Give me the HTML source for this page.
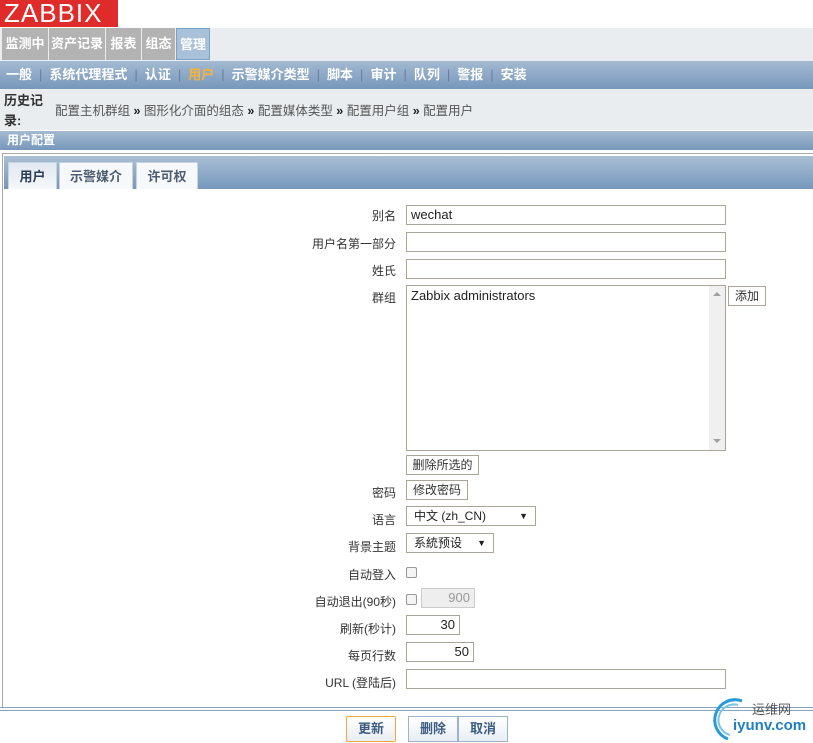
<!DOCTYPE html>
<html><head><meta charset="utf-8"><style>
*{box-sizing:border-box;margin:0;padding:0}
body{width:813px;height:743px;overflow:hidden;background:#fff;font-family:"Liberation Sans","Noto Sans CJK SC",sans-serif;font-size:12px;color:#222;position:relative}
.a{position:absolute}
.logo{left:0;top:0;width:118px;height:27px;background:#e02b2b;color:#fff;font-size:26px;line-height:27px;padding-left:4px;letter-spacing:1px}
.tm{top:28px;height:33px;background:#e9edf0;left:0;width:813px}
.ti{top:28px;height:32px;background:#b3b3b3;color:#fff;font-weight:bold;line-height:32px;text-align:center;font-size:13px}
.sub{top:61px;left:0;width:813px;height:28px;background:linear-gradient(#a3bad2,#7797bb);color:#fff;font-weight:bold;line-height:28px;font-size:13px;padding-left:6px;white-space:nowrap}
.sub span.s{color:#6a7b9a;margin:0 7px;font-weight:normal}
.bc{top:89px;left:0;width:813px;height:41px;background:#e9edf0}
.hb{top:131px;left:0;width:813px;height:19px;background:linear-gradient(#a3bad2,#7797bb);color:#fff;font-weight:bold;line-height:19px;padding-left:7px}
.box{top:153px;left:2px;width:811px;height:555px;border:1px solid #a8a8a8;border-right:none}
.tabs{top:156px;left:4px;width:809px;height:33px;background:linear-gradient(#a9bfd5,#7797bb)}
.tab{top:162px;height:27px;background:#f6f8fa;color:#4d5c72;font-weight:bold;text-align:center;line-height:27px;border:1px solid #c8d3de;border-bottom:none;font-size:13px}
.lb{right:417px;text-align:right;white-space:nowrap;font-size:12px;color:#333}
.in{left:406px;border:1px solid #a9a59b;background:#fff;height:20px;font-size:13px;line-height:18px;padding-left:4px;color:#222}
.btn{border:1px solid #a9a59b;background:#fff;height:20px;font-size:12px;line-height:18px;text-align:center;color:#333}
.cb{width:11px;height:11px;border:1px solid #999;border-radius:2px;background:#f4f4f4}
.bb{height:26px;line-height:24px;text-align:center;font-weight:bold;color:#3c5b80;font-size:13px;background:linear-gradient(#fff,#e8eef4)}
</style></head><body>
<div class="a logo">ZABBIX</div>
<div class="a tm"></div>
<div class="a ti" style="left:2px;width:46px">监测中</div>
<div class="a ti" style="left:49px;width:56px">资产记录</div>
<div class="a ti" style="left:106px;width:35px">报表</div>
<div class="a ti" style="left:142px;width:33px">组态</div>
<div class="a ti" style="left:176px;width:34px;background:#a8c0d8;border:1px solid #7c9fc4">管理</div>
<div class="a sub">一般<span class="s">|</span>系统代理程式<span class="s">|</span>认证<span class="s">|</span><span style="color:#f7b23a">用户</span><span class="s">|</span>示警媒介类型<span class="s">|</span>脚本<span class="s">|</span>审计<span class="s">|</span>队列<span class="s">|</span>警报<span class="s">|</span>安装</div>
<div class="a bc"></div>
<div class="a" style="left:4px;top:91px;font-weight:bold;line-height:20px;color:#333;font-size:13px">历史记<br>录:</div>
<div class="a" style="left:55px;top:100px;color:#555;white-space:nowrap;font-size:12.5px">配置主机群组 <b style="color:#222">»</b> 图形化介面的组态 <b style="color:#222">»</b> 配置媒体类型 <b style="color:#222">»</b> 配置用户组 <b style="color:#222">»</b> 配置用户</div>
<div class="a hb">用户配置</div>
<div class="a box"></div>
<div class="a tabs"></div>
<div class="a tab" style="left:8px;width:49px;background:linear-gradient(#e0e8f0,#f6f8fa);color:#2c3e58">用户</div>
<div class="a tab" style="left:59px;width:74px">示警媒介</div>
<div class="a tab" style="left:136px;width:62px">许可权</div>

<div class="a lb" style="top:207px">别名</div>
<div class="a in" style="top:205px;width:320px">wechat</div>
<div class="a lb" style="top:235px">用户名第一部分</div>
<div class="a in" style="top:232px;width:320px"></div>
<div class="a lb" style="top:262px">姓氏</div>
<div class="a in" style="top:259px;width:320px"></div>
<div class="a lb" style="top:289px">群组</div>
<div class="a in" style="top:285px;width:320px;height:166px;padding-top:1px">Zabbix administrators</div>
<div class="a" style="left:709px;top:286px;width:16px;height:164px;background:#f0f0f0"></div>
<div class="a" style="left:713px;top:292px;width:0;height:0;border:4px solid transparent;border-bottom:4px solid #a0a0a0;border-top:none"></div>
<div class="a" style="left:713px;top:439px;width:0;height:0;border:4px solid transparent;border-top:4px solid #a0a0a0;border-bottom:none"></div>
<div class="a btn" style="left:728px;top:286px;width:38px">添加</div>
<div class="a btn" style="left:406px;top:455px;width:73px">删除所选的</div>
<div class="a lb" style="top:484px">密码</div>
<div class="a btn" style="left:406px;top:480px;width:62px">修改密码</div>
<div class="a lb" style="top:511px">语言</div>
<div class="a in" style="top:506px;width:130px;font-size:12px;padding-left:7px">中文 (zh_CN)<span style="position:absolute;right:7px;font-size:9px">▼</span></div>
<div class="a lb" style="top:538px">背景主题</div>
<div class="a in" style="top:533px;width:88px;font-size:12px;padding-left:7px">系統预设<span style="position:absolute;right:7px;font-size:9px">▼</span></div>
<div class="a lb" style="top:566px">自动登入</div>
<div class="a cb" style="left:406px;top:567px"></div>
<div class="a lb" style="top:593px">自动退出(90秒)</div>
<div class="a cb" style="left:406px;top:594px"></div>
<div class="a in" style="left:421px;top:588px;width:54px;background:#eee;border-color:#ccc;color:#999;text-align:right;padding-right:4px">900</div>
<div class="a lb" style="top:620px">刷新(秒计)</div>
<div class="a in" style="top:615px;width:54px;text-align:right;padding-right:4px">30</div>
<div class="a lb" style="top:647px">每页行数</div>
<div class="a in" style="top:642px;width:68px;text-align:right;padding-right:4px">50</div>
<div class="a lb" style="top:674px">URL (登陆后)</div>
<div class="a in" style="top:669px;width:320px"></div>

<div class="a" style="left:0;top:707px;width:813px;height:4px;border-top:1px solid #8aa3be;border-bottom:1px solid #8aa3be"></div>
<div class="a bb" style="left:346px;top:716px;width:50px;border:1px solid #f3a640;border-radius:2px">更新</div>
<div class="a bb" style="left:408px;top:716px;width:50px;border:1px solid #9db3cb">删除</div>
<div class="a bb" style="left:458px;top:716px;width:50px;border:1px solid #9db3cb">取消</div>
<svg class="a" style="left:708px;top:695px" width="40" height="48"><path d="M34 6 A20 20 0 1 0 20 44" stroke="#2a9bd8" stroke-width="3" fill="none"/><path d="M30 10 A15 15 0 1 0 22 40" stroke="#7cc4ea" stroke-width="2" fill="none"/></svg>
<div class="a" style="left:752px;top:699px;color:#555;font-size:13px">运维网</div>
<div class="a" style="left:733px;top:717px;color:#1f7fc2;font-size:15px;font-weight:bold">iyunv.com</div>
</body></html>
